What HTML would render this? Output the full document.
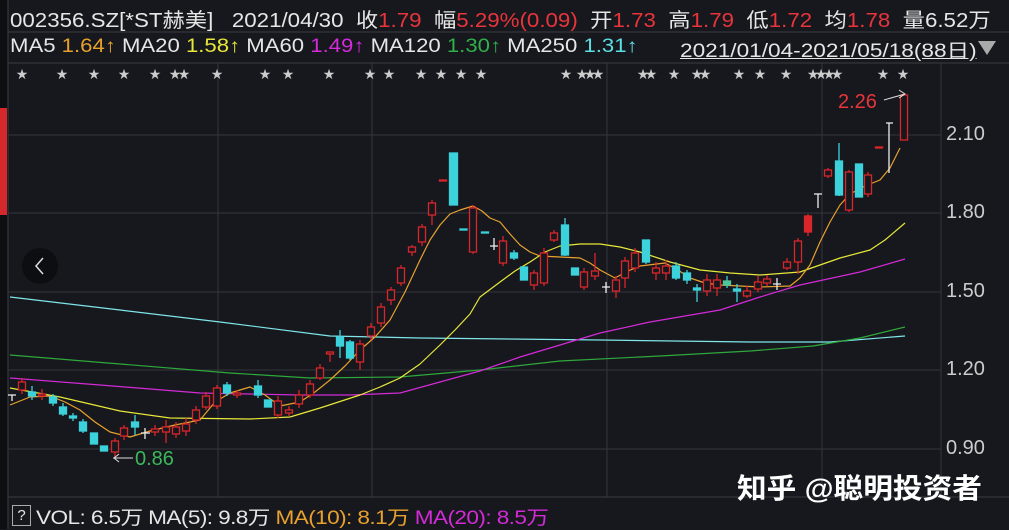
<!DOCTYPE html>
<html><head><meta charset="utf-8"><style>
html,body{margin:0;padding:0;background:#16181d;}
body{width:1009px;height:529px;position:relative;overflow:hidden;font-family:"Liberation Sans","Noto Sans CJK SC",sans-serif;color:#e6e6e6;}
.t{position:absolute;white-space:nowrap;transform-origin:0 0;}
.r{color:#e8343a}.o{color:#e8a12e}.y{color:#e8e83a}.m{color:#d42ad8}.g{color:#2fb04a}.c{color:#5ce0e6}
</style></head><body>
<svg width="1009" height="529" style="position:absolute;left:0;top:0">
<rect x="0" y="0" width="8" height="529" fill="#0e0f12"/>
<rect x="0" y="108" width="7" height="107" fill="#d4282c"/>
<line x1="8" y1="32" x2="1009" y2="32" stroke="#3a3c42"/>
<line x1="8" y1="63" x2="1009" y2="63" stroke="#3a3c42"/>
<line x1="8" y1="497" x2="1009" y2="497" stroke="#3a3c42"/>
<line x1="8" y1="0" x2="8" y2="529" stroke="#3a3c42"/>
<g stroke="#34363c" stroke-width="1">
<line x1="8" y1="135" x2="941" y2="135"/><line x1="8" y1="213" x2="941" y2="213"/><line x1="8" y1="292" x2="941" y2="292"/><line x1="8" y1="370" x2="941" y2="370"/><line x1="8" y1="449" x2="941" y2="449"/>
<line x1="218" y1="63" x2="218" y2="497"/><line x1="372" y1="63" x2="372" y2="497"/><line x1="607" y1="63" x2="607" y2="497"/><line x1="822" y1="63" x2="822" y2="497"/><line x1="941" y1="63" x2="941" y2="497"/>
</g>
<circle cx="40" cy="266" r="18" fill="#0d0e11"/>
<path d="M43 258 L36 266 L43 274" stroke="#ddd" stroke-width="1.5" fill="none"/>
<g fill="none" stroke-width="1.2" stroke-linejoin="round">
<polyline stroke="#7fe6ea" points="10,297 120,310 220,322 330,336 420,338 600,340 750,342 830,342 905,336"/>
<polyline stroke="#2fa83c" points="10,355 120,364 230,373 310,378 400,377 480,370 560,361 660,356 750,351 813,346 860,338 905,327"/>
<polyline stroke="#d42ad8" points="10,378 100,385 200,393 300,395 350,395 400,393 440,382 480,371 520,357 560,345 600,333 650,322 720,310 760,297 800,285 860,272 905,259"/>
<polyline stroke="#e8e83a" points="10,388 60,397 90,404 120,411 170,418 250,419 290,417 320,408 360,395 380,387 400,378 420,364 440,345 455,330 470,314 480,297 500,282 515,271 530,262 545,252 560,246 580,244 600,244 620,247 640,252 670,262 700,270 730,273 760,275 800,272 820,265 840,258 870,250 885,240 905,223"/>
<polyline stroke="#e8a12e" points="10,405 30,397 50,396 65,402 80,410 95,422 110,432 130,437 150,431 175,425 200,420 215,402 230,393 250,387 265,395 280,406 300,402 315,392 330,380 345,366 360,350 375,337 390,320 405,292 420,260 430,240 440,225 450,214 460,210 473,206 482,211 490,218 500,222 510,234 520,245 530,252 540,256 560,257 580,258 590,263 600,270 615,278 628,271 640,266 665,263 678,270 690,278 705,283 720,285 760,287 790,286 800,278 810,265 820,242 830,222 840,205 850,194 865,186 880,180 890,168 900,148"/>
</g>
<g stroke-width="1.3">
<g stroke="#d9262b" fill="#16181d">
<line x1="22" y1="378" x2="22" y2="394"/><rect x="18.5" y="382" width="7" height="8"/>
<line x1="42" y1="389" x2="42" y2="400"/><rect x="38.5" y="394" width="7" height="2"/>
<line x1="115" y1="438" x2="115" y2="458"/><rect x="111.5" y="441" width="7" height="11"/>
<line x1="124" y1="425" x2="124" y2="440"/><rect x="120.5" y="428" width="7" height="8"/>
<line x1="155" y1="425" x2="155" y2="436"/><rect x="151.5" y="429" width="7" height="3"/>
<line x1="166" y1="420" x2="166" y2="443"/><rect x="162.5" y="427" width="7" height="5"/>
<line x1="176" y1="422" x2="176" y2="438"/><rect x="172.5" y="427" width="7" height="7"/>
<line x1="186" y1="418" x2="186" y2="436"/><rect x="182.5" y="424" width="7" height="7"/>
<line x1="196" y1="406" x2="196" y2="424"/><rect x="192.5" y="410" width="7" height="10"/>
<line x1="206" y1="392" x2="206" y2="410"/><rect x="202.5" y="396" width="7" height="11"/>
<line x1="217" y1="385" x2="217" y2="409"/><rect x="213.5" y="388" width="7" height="18"/>
<line x1="237" y1="390" x2="237" y2="398"/><rect x="233.5" y="393" width="7" height="2"/>
<line x1="278" y1="396" x2="278" y2="418"/><rect x="274.5" y="401" width="7" height="14"/>
<line x1="289" y1="406" x2="289" y2="416"/><rect x="285.5" y="410" width="7" height="3"/>
<line x1="299" y1="390" x2="299" y2="408"/><rect x="295.5" y="395" width="7" height="9"/>
<line x1="310" y1="380" x2="310" y2="398"/><rect x="306.5" y="384" width="7" height="11"/>
<line x1="320" y1="364" x2="320" y2="380"/><rect x="316.5" y="368" width="7" height="10"/>
<line x1="330" y1="353" x2="330" y2="362"/><rect x="326.5" y="352" width="7" height="2"/>
<line x1="360" y1="340" x2="360" y2="370"/><rect x="356.5" y="344" width="7" height="18"/>
<line x1="371" y1="323" x2="371" y2="340"/><rect x="367.5" y="327" width="7" height="9"/>
<line x1="381" y1="303" x2="381" y2="327"/><rect x="377.5" y="307" width="7" height="16"/>
<line x1="391" y1="287" x2="391" y2="305"/><rect x="387.5" y="290" width="7" height="10"/>
<line x1="401" y1="265" x2="401" y2="286"/><rect x="397.5" y="268" width="7" height="15"/>
<line x1="412" y1="245" x2="412" y2="256"/><rect x="408.5" y="247" width="7" height="5"/>
<line x1="422" y1="224" x2="422" y2="246"/><rect x="418.5" y="227" width="7" height="15"/>
<line x1="432" y1="200" x2="432" y2="225"/><rect x="428.5" y="203" width="7" height="12"/>
<rect x="439.5" y="180" width="7" height="1"/>
<line x1="473" y1="205" x2="473" y2="254"/><rect x="469.5" y="208" width="7" height="44"/>
<line x1="503" y1="236" x2="503" y2="266"/><rect x="499.5" y="241" width="7" height="22"/>
<line x1="534" y1="270" x2="534" y2="290"/><rect x="530.5" y="273" width="7" height="12"/>
<line x1="544" y1="248" x2="544" y2="286"/><rect x="540.5" y="253" width="7" height="30"/>
<line x1="554" y1="230" x2="554" y2="242"/><rect x="550.5" y="233" width="7" height="7"/>
<line x1="584" y1="268" x2="584" y2="290"/><rect x="580.5" y="272" width="7" height="15"/>
<line x1="595" y1="253" x2="595" y2="280"/><rect x="591.5" y="271" width="7" height="5"/>
<line x1="616" y1="276" x2="616" y2="298"/><rect x="612.5" y="280" width="7" height="11"/>
<line x1="625" y1="257" x2="625" y2="288"/><rect x="621.5" y="261" width="7" height="17"/>
<line x1="635" y1="248" x2="635" y2="272"/><rect x="631.5" y="253" width="7" height="15"/>
<line x1="656" y1="262" x2="656" y2="280"/><rect x="652.5" y="268" width="7" height="5"/>
<line x1="666" y1="260" x2="666" y2="280"/><rect x="662.5" y="266" width="7" height="7"/>
<line x1="707" y1="274" x2="707" y2="296"/><rect x="703.5" y="280" width="7" height="11"/>
<line x1="717" y1="274" x2="717" y2="296"/><rect x="713.5" y="280" width="7" height="8"/>
<line x1="747" y1="286" x2="747" y2="298"/><rect x="743.5" y="291" width="7" height="5"/>
<line x1="758" y1="276" x2="758" y2="292"/><rect x="754.5" y="282" width="7" height="7"/>
<line x1="767" y1="275" x2="767" y2="286"/><rect x="763.5" y="279" width="7" height="4"/>
<line x1="787" y1="258" x2="787" y2="270"/><rect x="783.5" y="262" width="7" height="6"/>
<line x1="798" y1="238" x2="798" y2="274"/><rect x="794.5" y="241" width="7" height="21"/>
<line x1="808" y1="214" x2="808" y2="236"/><rect x="804.5" y="216" width="7" height="16" fill="#d9262b"/>
<line x1="828" y1="168" x2="828" y2="178"/><rect x="824.5" y="170" width="7" height="6"/>
<line x1="849" y1="170" x2="849" y2="212"/><rect x="845.5" y="172" width="7" height="38"/>
<line x1="868" y1="172" x2="868" y2="197"/><rect x="864.5" y="175" width="7" height="19"/>
<rect x="875.5" y="147" width="7" height="1"/>
<line x1="904" y1="95" x2="904" y2="140"/><rect x="900.5" y="95" width="7" height="45"/>
</g>
<g stroke="#3cd2dc" fill="#3cd2dc">
<line x1="32" y1="386" x2="32" y2="400"/><rect x="28.5" y="392" width="7" height="4"/>
<line x1="53" y1="394" x2="53" y2="406"/><rect x="49.5" y="397" width="7" height="6"/>
<line x1="63" y1="403" x2="63" y2="416"/><rect x="59.5" y="407" width="7" height="7"/>
<line x1="73" y1="413" x2="73" y2="421"/><rect x="69.5" y="416" width="7" height="2"/>
<line x1="83" y1="419" x2="83" y2="433"/><rect x="79.5" y="422" width="7" height="9"/>
<rect x="90.5" y="433" width="7" height="11"/>
<rect x="100.5" y="446" width="7" height="5"/>
<line x1="135" y1="415" x2="135" y2="435"/><rect x="131.5" y="422" width="7" height="5"/>
<line x1="227" y1="382" x2="227" y2="396"/><rect x="223.5" y="385" width="7" height="8"/>
<line x1="258" y1="380" x2="258" y2="398"/><rect x="254.5" y="386" width="7" height="9"/>
<rect x="264.5" y="400" width="7" height="7"/>
<line x1="340" y1="330" x2="340" y2="358"/><rect x="336.5" y="337" width="7" height="9"/>
<line x1="350" y1="340" x2="350" y2="360"/><rect x="346.5" y="342" width="7" height="16"/>
<rect x="449.5" y="153" width="8" height="52"/>
<rect x="460" y="229" width="7" height="1"/><rect x="481.5" y="232" width="7" height="1"/>
<line x1="514" y1="250" x2="514" y2="260"/><rect x="510.5" y="253" width="7" height="5"/>
<rect x="520.5" y="267" width="7" height="13"/>
<line x1="565" y1="218" x2="565" y2="256"/><rect x="561.5" y="225" width="7" height="30"/>
<rect x="571.5" y="268" width="7" height="7"/>
<line x1="646" y1="240" x2="646" y2="264"/><rect x="642.5" y="240" width="7" height="22"/>
<line x1="676" y1="262" x2="676" y2="280"/><rect x="672.5" y="266" width="7" height="12"/>
<line x1="687" y1="270" x2="687" y2="284"/><rect x="683.5" y="273" width="7" height="7"/>
<line x1="697" y1="284" x2="697" y2="302"/><rect x="693.5" y="288" width="7" height="2"/>
<line x1="727" y1="276" x2="727" y2="288"/><rect x="723.5" y="281" width="7" height="4" fill="#4fc79a" stroke="#4fc79a"/>
<line x1="737" y1="284" x2="737" y2="302"/><rect x="733.5" y="289" width="7" height="2"/>
<line x1="839" y1="143" x2="839" y2="196"/><rect x="835.5" y="161" width="7" height="34"/>
<rect x="855.5" y="164" width="7" height="33"/>
</g>
<g stroke="#eee" fill="none">
<path d="M8 395h8M12 395v6"/>
<path d="M141 433h9M145 428v11"/>
<path d="M490 246h8M494 238v12"/>
<path d="M602 287h8M606 282v11"/>
<path d="M773 284h8M777 278v12"/>
<path d="M814 194h8M818 194v14"/>
<path d="M886 123h7M889 123v50"/>
</g>
</g>
<g stroke="#ddd" fill="none" stroke-width="1">
<path d="M113 458h20M119 454l-5 4 5 4"/>
<path d="M884 100l21 -6M899 90l6 4-6 4"/>
</g>
<g fill="#ccc" font-size="14" font-family="DejaVu Sans,sans-serif" text-anchor="middle">
<text x="22" y="79">★</text><text x="62" y="79">★</text><text x="94" y="79">★</text><text x="124" y="79">★</text><text x="155" y="79">★</text><text x="175" y="79">★</text><text x="184" y="79">★</text><text x="217" y="79">★</text><text x="265" y="79">★</text><text x="288" y="79">★</text><text x="329" y="79">★</text><text x="370" y="79">★</text><text x="389" y="79">★</text><text x="421" y="79">★</text><text x="441" y="79">★</text><text x="461" y="79">★</text><text x="481" y="79">★</text>
<text x="566" y="79">★</text><text x="582" y="79">★</text><text x="590" y="79">★</text><text x="598" y="79">★</text><text x="643" y="79">★</text><text x="651" y="79">★</text><text x="674" y="79">★</text><text x="697" y="79">★</text><text x="705" y="79">★</text><text x="739" y="79">★</text><text x="760" y="79">★</text><text x="786" y="79">★</text><text x="813" y="79">★</text><text x="821" y="79">★</text><text x="829" y="79">★</text><text x="837" y="79">★</text><text x="883" y="79">★</text><text x="903" y="79">★</text>
</g>
<path d="M978 41h18l-9 14z" fill="#aaa"/>
</svg>
<div class="t" style="left:10px;top:4px;font-size:20px;transform:scaleX(1.115);">002356.SZ[*ST赫美]&nbsp;&nbsp;&nbsp;2021/04/30&nbsp;&nbsp;收<span class="r">1.79</span>&nbsp;&nbsp;幅<span class="r">5.29%(0.09)</span>&nbsp;&nbsp;开<span class="r">1.73</span>&nbsp;&nbsp;高<span class="r">1.79</span>&nbsp;&nbsp;低<span class="r">1.72</span>&nbsp;&nbsp;均<span class="r">1.78</span>&nbsp;&nbsp;量6.52万</div>
<div class="t" style="left:10px;top:36px;font-size:19px;transform:scaleX(1.165);">MA5 <span class="o">1.64↑</span> MA20 <span class="y">1.58↑</span> MA60 <span class="m">1.49↑</span> MA120 <span class="g">1.30↑</span> MA250 <span class="c">1.31↑</span></div>
<div class="t" style="left:680px;top:36px;font-size:19px;text-decoration:underline;transform:scaleX(1.19);">2021/01/04-2021/05/18(88日)</div>
<div class="t" style="left:946px;top:123px;font-size:20px;color:#ccc">2.10</div>
<div class="t" style="left:946px;top:201px;font-size:20px;color:#ccc">1.80</div>
<div class="t" style="left:946px;top:280px;font-size:20px;color:#ccc">1.50</div>
<div class="t" style="left:946px;top:358px;font-size:20px;color:#ccc">1.20</div>
<div class="t" style="left:946px;top:437px;font-size:20px;color:#ccc">0.90</div>
<div class="t r" style="left:838px;top:91px;font-size:20px;">2.26</div>
<div class="t" style="left:135px;top:448px;font-size:20px;color:#3cb85a">0.86</div>
<div class="t" style="left:737px;top:467px;font-size:28px;color:#fff;font-weight:bold;transform:scaleX(1.06);">知乎 @聪明投资者</div>
<div class="t" style="left:12px;top:505px;width:17px;height:19px;border:1px solid #aaa;font-size:15px;text-align:center;line-height:19px;">?</div>
<div class="t" style="left:36px;top:503px;font-size:19px;transform:scaleX(1.19);letter-spacing:-0.5px;">VOL: 6.5万 MA(5): 9.8万 <span class="o">MA(10): 8.1万</span> <span class="m">MA(20): 8.5万</span></div>
</body></html>
